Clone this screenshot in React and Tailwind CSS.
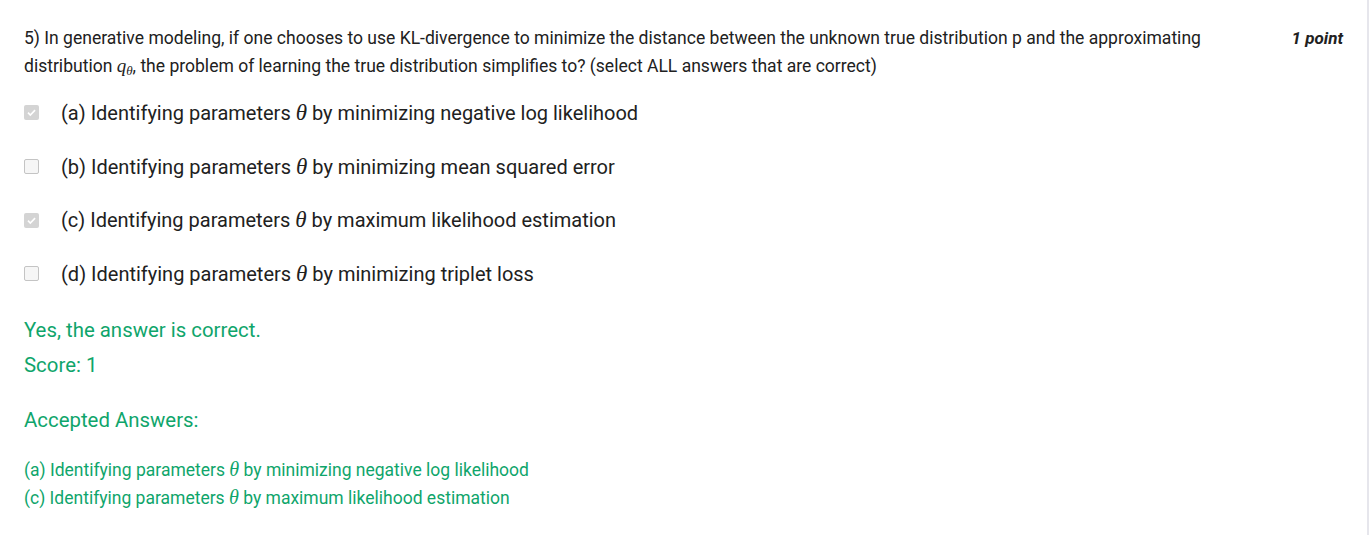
const options = [
  { label: "(a)", text: "by minimizing negative log likelihood", checked: true },
  { label: "(b)", text: "by minimizing mean squared error", checked: false },
  { label: "(c)", text: "by maximum likelihood estimation", checked: true },
  { label: "(d)", text: "by minimizing triplet loss", checked: false },
];

function Theta() {
  return <span className="font-['Liberation_Serif',serif] text-[1.15em] italic leading-none">θ</span>;
}

function Checkbox({ checked }) {
  return checked ? (
    <span className="flex h-[15px] w-[15px] items-center justify-center rounded-[2px] bg-[#d4d4d4]">
      <svg viewBox="0 0 12 12" className="h-[11px] w-[11px]">
        <path d="M2.2 6.2l2.5 2.5L9.9 3.5" fill="none" stroke="#fff" strokeWidth="1.8" />
      </svg>
    </span>
  ) : (
    <span className="block h-[15px] w-[15px] rounded-[2px] border border-[#c4c4c4] bg-[#f6f6f6]" />
  );
}

export default function App() {
  return (
    <div className="relative min-h-[535px] bg-white font-['Roboto',sans-serif] text-[#212121]">
      <div className="pl-6 pr-6 pt-[24px]">
        <div className="flex items-start justify-between">
          <p className="max-w-[1200px] text-[17.55px] leading-[28px]">
            5) In generative modeling, if one chooses to use KL-divergence to minimize the distance between the unknown true distribution p and the approximating distribution{" "}
            <span className="font-['Liberation_Serif',serif] text-[19px] italic leading-none">
              q<sub className="text-[13px]">θ</sub>
            </span>
            , the problem of learning the true distribution simplifies to? (select ALL answers that are correct)
          </p>
          <span className="mr-[2px] pt-[2px] text-[17px] font-bold italic leading-[24px]">1 point</span>
        </div>

        <div className="mt-[6px] flex flex-col">
          {options.map((o) => (
            <div key={o.label} className="flex h-[53.7px] items-center">
              <span className="w-[37px]">
                <Checkbox checked={o.checked} />
              </span>
              <span className="text-[20px]">
                {o.label} Identifying parameters <Theta /> {o.text}
              </span>
            </div>
          ))}
        </div>

        <div className="mt-[15px] text-[#0fa56b]">
          <p className="text-[20.4px] leading-[28px]">Yes, the answer is correct.</p>
          <p className="mt-[7px] text-[20.4px] leading-[28px]">Score: 1</p>
          <p className="mt-[27px] text-[20.4px] leading-[28px]">Accepted Answers:</p>
          <div className="mt-[22px] text-[17.5px] leading-[28px]">
            <p>
              (a) Identifying parameters <Theta /> by minimizing negative log likelihood
            </p>
            <p>
              (c) Identifying parameters <Theta /> by maximum likelihood estimation
            </p>
          </div>
        </div>
      </div>
      <div className="absolute right-0 top-0 h-full w-[2px] bg-[#e6e6ec]" />
    </div>
  );
}
